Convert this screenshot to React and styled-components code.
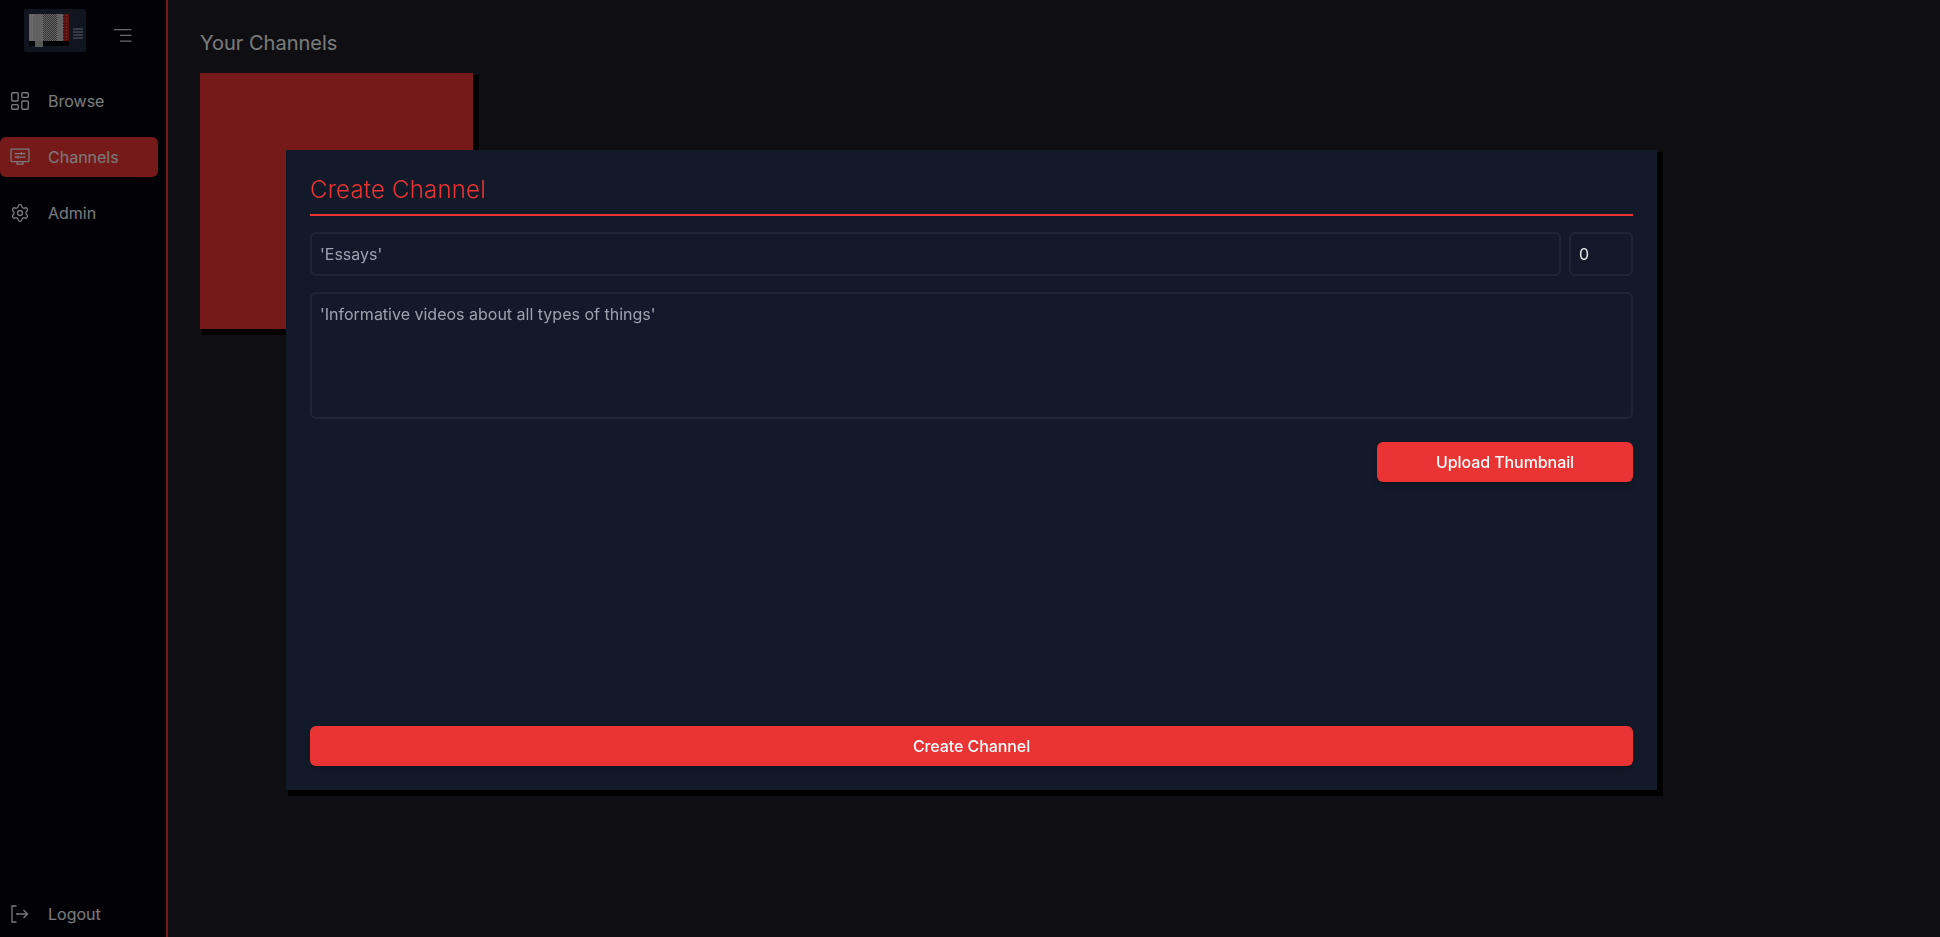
import React from "react";
import styled, { createGlobalStyle } from "styled-components";
import { LayoutDashboard, Settings } from "lucide-react";

const GlobalStyle = createGlobalStyle`
    *{
        box-sizing: border-box;
    }
    html,body{
        margin: 0;
        padding: 0;
        background: #1f1e26;
        font-family: Inter, "Liberation Sans", sans-serif;
    }
`;

const Logo = () => (
    <LogoSvg viewBox="0 0 62 43">
        <defs>
            <pattern id="noise" width="2" height="2" patternUnits="userSpaceOnUse">
                <rect width="2" height="2" fill="#c2c2c2" />
                <rect width="1" height="1" fill="#6e6e6e" />
                <rect x="1" y="1" width="1" height="1" fill="#6e6e6e" />
            </pattern>
            <pattern id="redNoise" width="3" height="3" patternUnits="userSpaceOnUse">
                <rect width="3" height="3" fill="#b3201f" />
                <rect width="1" height="1" fill="#f26a6a" />
            </pattern>
            <pattern id="edge" width="2" height="2" patternUnits="userSpaceOnUse">
                <rect width="2" height="2" fill="#c2c2c2" />
                <rect width="1" height="1" fill="#f0f0f0" />
            </pattern>
        </defs>
        <rect width="62" height="43" rx="2" fill="#202a40" />
        <rect x="5" y="5" width="40" height="27" fill="#c2c2c2" />
        <rect x="6" y="6" width="3" height="25" fill="url(#edge)" />
        <rect x="19" y="5" width="14" height="27" fill="url(#noise)" />
        <rect x="39" y="5" width="6" height="27" fill="url(#redNoise)" />
        <rect x="5" y="32" width="40" height="5" fill="#05060c" />
        <rect x="11" y="32" width="8" height="6" fill="#b0b0b0" />
        <path d="M49 20h10M49 23h10M49 26h10M49 29h10" stroke="#b9bdc6" strokeWidth="1" />
    </LogoSvg>
);

const MenuIcon = () => (
    <MenuSvg viewBox="0 0 18 13" fill="none" stroke="#d1d5db" strokeWidth="1.2">
        <path d="M0 .7h17.5M6 6.4h11.5M6 12.2h11.5" />
    </MenuSvg>
);

const ChannelsIcon = () => (
    <svg width="20" height="20" viewBox="0 0 20 20" fill="none" stroke="currentColor" strokeWidth="1.25">
        <rect x="1" y="2" width="18" height="12.5" rx="0.5" />
        <path d="M7 14.5v2.5h6v-2.5" />
        <path d="M4.5 6.5h11M4.5 10.2h11M11.5 5v2.8M8 8.8v2.8" />
    </svg>
);

const LogoutIcon = () => (
    <svg width="20" height="20" viewBox="0 0 20 20" fill="none" stroke="currentColor" strokeWidth="1.3">
        <path d="M6.5 2H2v16h4.5" />
        <path d="M6 10h11.5M13.5 6l4 4-4 4" />
    </svg>
);

const navItems = [
    { name: "Browse", icon: <LayoutDashboard size={22} strokeWidth={1.5} /> },
    { name: "Channels", icon: <ChannelsIcon />, active: true },
    { name: "Admin", icon: <Settings size={20} strokeWidth={1.6} /> },
];

const App = () => {
    return (
        <Page>
            <GlobalStyle />
            <Sidebar>
                <Brand>
                    <Logo />
                    <MenuIcon />
                </Brand>
                <Nav>
                    {navItems.map((item) => (
                        <NavItem key={item.name} $active={item.active}>
                            <IconSlot>{item.icon}</IconSlot>
                            <span>{item.name}</span>
                        </NavItem>
                    ))}
                </Nav>
                <Footer>
                    <NavItem>
                        <IconSlot><LogoutIcon /></IconSlot>
                        <span>Logout</span>
                    </NavItem>
                </Footer>
            </Sidebar>
            <Main>
                <Heading>Your Channels</Heading>
                <ChannelCard />
            </Main>
            <Backdrop>
                <Modal>
                    <Title>Create Channel</Title>
                    <InputRow>
                        <TextInput defaultValue="'Essays'" />
                        <NumberInput defaultValue="0" />
                    </InputRow>
                    <TextArea defaultValue="'Informative videos about all types of things'" />
                    <UploadRow>
                        <Button $width="256px">Upload Thumbnail</Button>
                    </UploadRow>
                    <Spacer />
                    <Button>Create Channel</Button>
                </Modal>
            </Backdrop>
        </Page>
    );
};

const Page = styled.div`
    display: flex;
    height: 100vh;
    background: #1f1e26;
    overflow: hidden;
`;

const Sidebar = styled.aside`
    width: 168px;
    flex-shrink: 0;
    display: flex;
    flex-direction: column;
    background: #04040d;
    border-right: 2px solid #ea3433;
    padding-right: 8px;
`;

const Brand = styled.div`
    display: flex;
    align-items: center;
    height: 61px;
    padding: 9px 0 0 24px;
`;

const LogoSvg = styled.svg`
    width: 62px;
    height: 43px;
    margin-top: -9px;
`;

const MenuSvg = styled.svg`
    width: 18px;
    height: 13px;
    margin-left: 28px;
    margin-top: 1px;
`;

const Nav = styled.nav`
    display: flex;
    flex-direction: column;
    gap: 16px;
    margin-top: 20px;
`;

const NavItem = styled.div`
    display: flex;
    align-items: center;
    gap: 18px;
    height: 40px;
    padding-left: 10px;
    border-radius: 6px;
    font-size: 16px;
    color: #f3f4f6;
    background: ${(props) => (props.$active ? "#ea3433" : "transparent")};
`;

const IconSlot = styled.div`
    width: 20px;
    height: 20px;
    display: flex;
    align-items: center;
    justify-content: center;
    svg{
        flex-shrink: 0;
    }
`;

const Footer = styled.div`
    margin-top: auto;
    margin-bottom: 3px;
`;

const Main = styled.main`
    flex: 1;
    padding: 29px 32px;
`;

const Heading = styled.h2`
    margin: 0 0 16px;
    font-size: 20px;
    line-height: 28px;
    font-weight: 400;
    color: #f3f4f6;
`;

const ChannelCard = styled.div`
    width: 273px;
    height: 256px;
    background: #ea3433;
    box-shadow: 4px 4px 0 2px #000;
`;

const Backdrop = styled.div`
    position: fixed;
    inset: 0;
    background: rgba(0,0,0,0.5);
`;

const Modal = styled.div`
    position: absolute;
    left: 286px;
    top: 150px;
    width: 1371px;
    height: 640px;
    display: flex;
    flex-direction: column;
    padding: 24px;
    background: #121928;
    box-shadow: 4px 4px 0 2px #000;
`;

const Title = styled.h2`
    margin: 0 0 16px;
    padding-bottom: 8px;
    border-bottom: 2px solid #ea3433;
    font-size: 24px;
    line-height: 32px;
    font-weight: 300;
    letter-spacing: 0.2px;
    color: #ea3433;
`;

const InputRow = styled.div`
    display: flex;
    gap: 8px;
    margin-bottom: 16px;
`;

const TextInput = styled.input`
    flex: 1;
    min-width: 0;
    height: 44px;
    padding: 0 8px;
    background: transparent;
    border: 2px solid #1f2533;
    border-radius: 6px;
    outline: none;
    font-family: inherit;
    font-size: 16px;
    color: #9ca3af;
`;

const NumberInput = styled(TextInput)`
    flex: none;
    width: 64px;
    color: #e5e7eb;
`;

const TextArea = styled.textarea`
    display: block;
    height: 127px;
    padding: 8px;
    background: transparent;
    border: 2px solid #1f2533;
    border-radius: 6px;
    outline: none;
    resize: none;
    font-family: inherit;
    font-size: 16px;
    line-height: 24px;
    color: #9ca3af;
`;

const UploadRow = styled.div`
    display: flex;
    justify-content: flex-end;
    margin-top: 23px;
`;

const Spacer = styled.div`
    flex: 1;
`;

const Button = styled.button`
    width: ${(props) => props.$width || "100%"};
    height: 40px;
    border: none;
    border-radius: 6px;
    background: #ea3433;
    font-family: inherit;
    font-size: 16px;
    font-weight: 500;
    letter-spacing: -0.08px;
    color: #f9fafb;
    box-shadow: 0 4px 6px -1px rgba(0,0,0,0.2);
`;

export default App;
